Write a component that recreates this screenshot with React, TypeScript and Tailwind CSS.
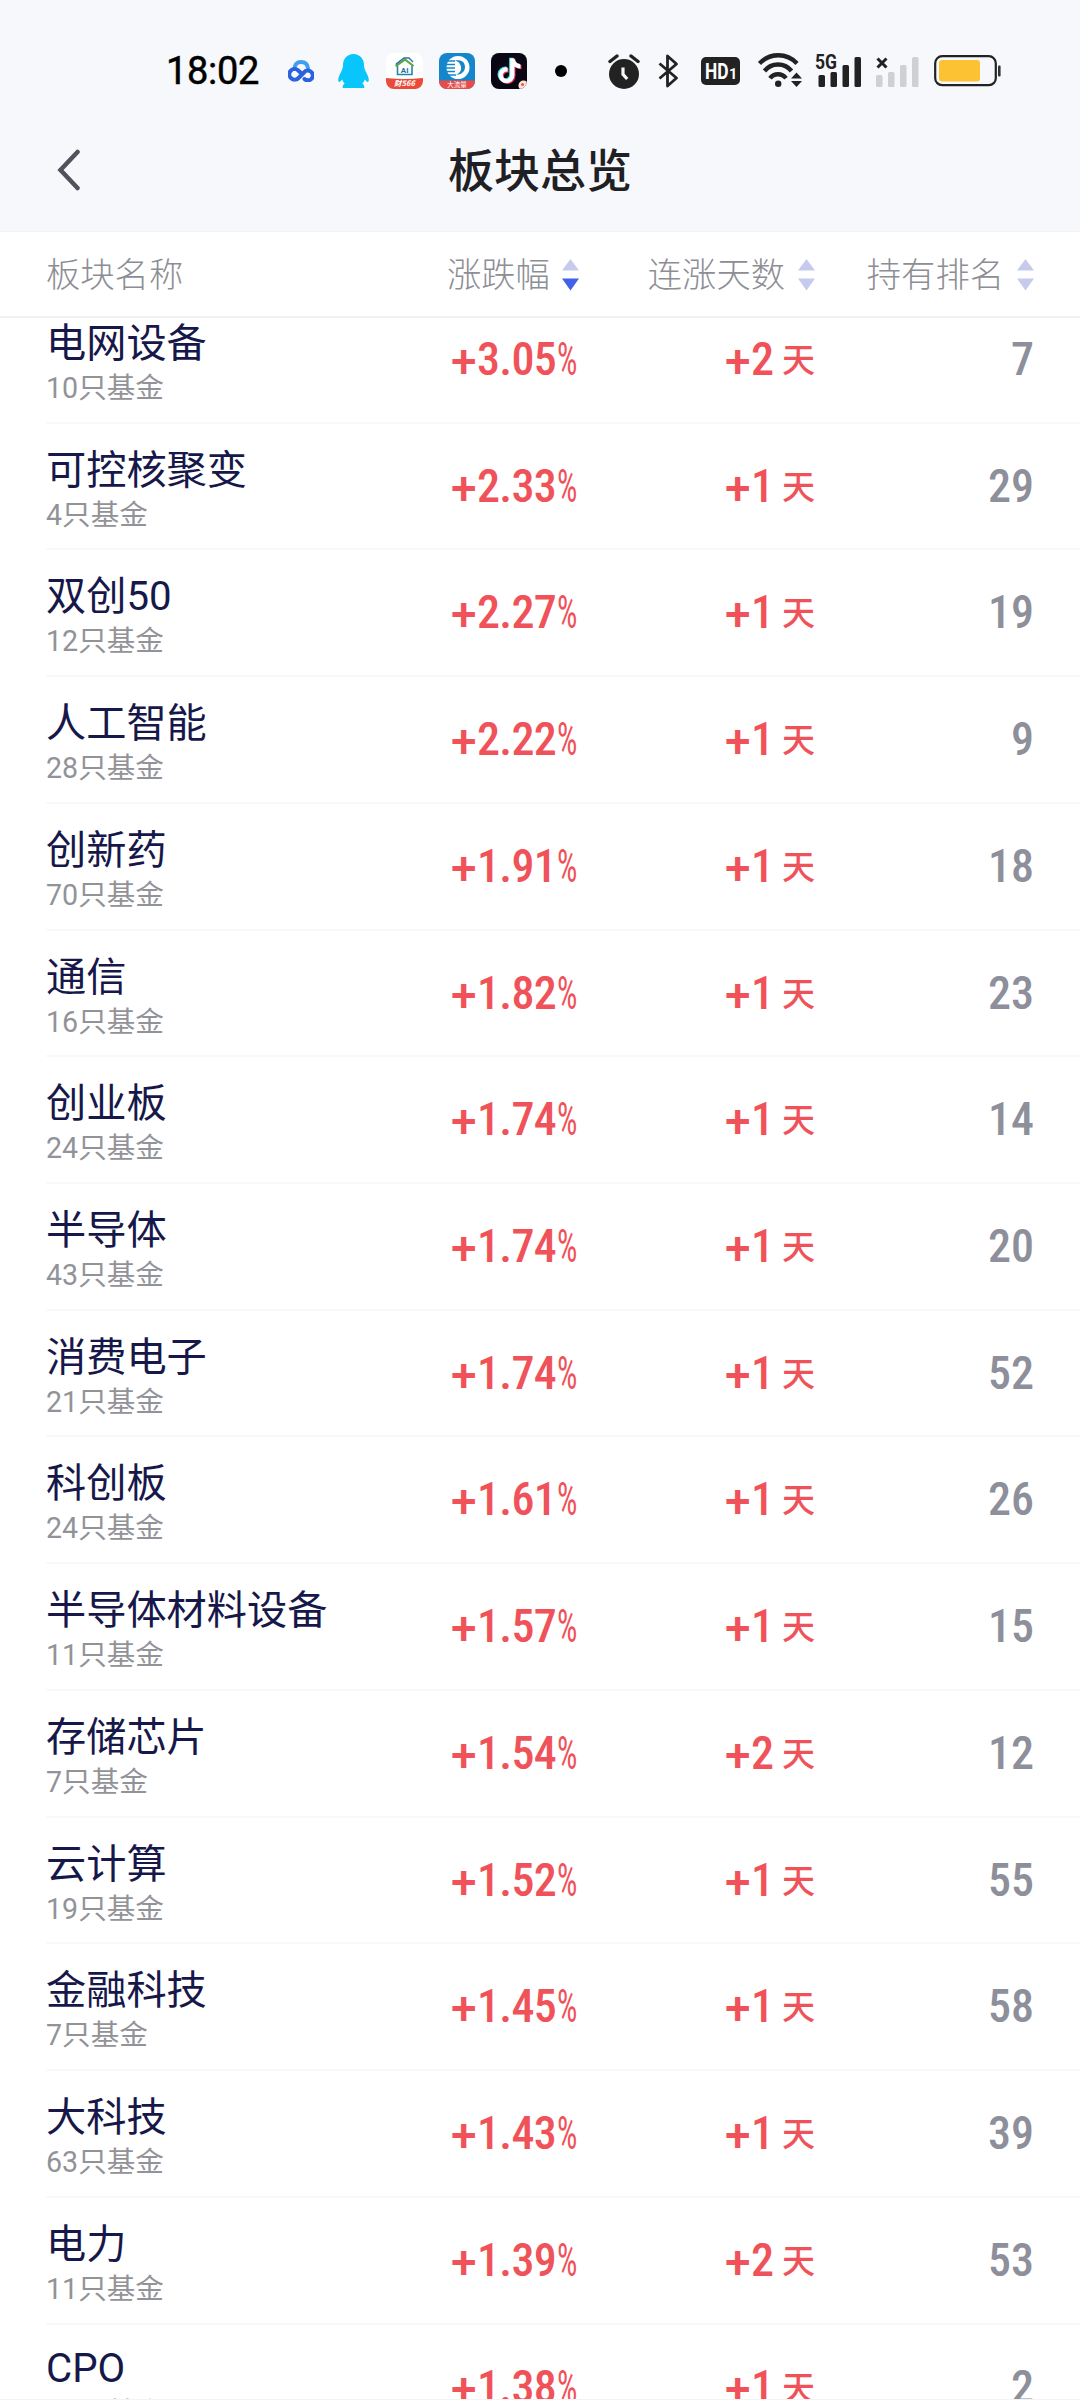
import { FaTiktok } from "react-icons/fa6"
import clsx from "clsx"

type Sector = {
  name: string
  funds: number
  change: string
  days: number
  rank: number
}

const sectors: Sector[] = [
  { name: "电网设备", funds: 10, change: "3.05", days: 2, rank: 7 },
  { name: "可控核聚变", funds: 4, change: "2.33", days: 1, rank: 29 },
  { name: "双创50", funds: 12, change: "2.27", days: 1, rank: 19 },
  { name: "人工智能", funds: 28, change: "2.22", days: 1, rank: 9 },
  { name: "创新药", funds: 70, change: "1.91", days: 1, rank: 18 },
  { name: "通信", funds: 16, change: "1.82", days: 1, rank: 23 },
  { name: "创业板", funds: 24, change: "1.74", days: 1, rank: 14 },
  { name: "半导体", funds: 43, change: "1.74", days: 1, rank: 20 },
  { name: "消费电子", funds: 21, change: "1.74", days: 1, rank: 52 },
  { name: "科创板", funds: 24, change: "1.61", days: 1, rank: 26 },
  { name: "半导体材料设备", funds: 11, change: "1.57", days: 1, rank: 15 },
  { name: "存储芯片", funds: 7, change: "1.54", days: 2, rank: 12 },
  { name: "云计算", funds: 19, change: "1.52", days: 1, rank: 55 },
  { name: "金融科技", funds: 7, change: "1.45", days: 1, rank: 58 },
  { name: "大科技", funds: 63, change: "1.43", days: 1, rank: 39 },
  { name: "电力", funds: 11, change: "1.39", days: 2, rank: 53 },
  { name: "CPO", funds: 18, change: "1.38", days: 1, rank: 2 },
]

function AppIcons() {
  return (
    <div className="flex items-center">
      <svg className="ml-[30px]" width="26" height="22" viewBox="0 0 26 22" fill="none" strokeLinecap="round">
        <path d="M6.500 9C6.500 4.500 9 2 13 2s6.500 2.500 7 6" stroke="#3fa0f2" strokeWidth="4" />
        <path
          d="m13 13-3-2.800A5.300 5.300 0 1 0 10.500 18L16 12.500A4.900 4.900 0 1 1 16.500 19"
          stroke="#2b62e0"
          strokeWidth="4"
          strokeLinejoin="round"
        />
      </svg>
      <svg className="ml-6" width="31" height="34" viewBox="0 0 31 34" fill="#08c6fb">
        <path d="M15.500 0C9 0 5 5 5 11c0 3-1 5-2.500 8S-.5 25.500.6 27.500c.8 1.200 2.400-.5 3.600-2 .6 1.800 1.300 3 2.500 4.300-1.500.7-2.200 1.700-2 4.200h21.600c.2-2.500-.5-3.500-2-4.200 1.200-1.300 1.900-2.500 2.500-4.300 1.200 1.500 2.800 3.200 3.600 2 1.100-2-.4-5.500-1.900-8.500S26 14 26 11C26 5 22 0 15.500 0Z" />
      </svg>
      <svg className="ml-[17px]" width="37" height="36" viewBox="0 0 37 36">
        <clipPath id="house-clip">
          <rect width="37" height="36" rx="8" />
        </clipPath>
        <g clipPath="url(#house-clip)">
          <rect width="37" height="36" fill="#fff" />
          <path d="M11.500 12.500v9h14.500v-9" fill="none" stroke="#2287a8" strokeWidth="1.600" />
          <path d="m9.500 13 9.500-6.500 8.500 6.500" fill="none" stroke="#58a83d" strokeWidth="2.200" />
          <path d="m10 11 8-6h5l4 4" fill="none" stroke="#2a6fb0" strokeWidth="1.300" />
          <text x="18.700" y="19.500" textAnchor="middle" fontSize="8" fontWeight="700" fill="#2573a6" fontFamily="Roboto">AI</text>
          <path d="M0 25q18.500 2 37 0v11H0Z" fill="#ea4b38" />
          <text x="18.500" y="33" textAnchor="middle" fontSize="7.500" fontWeight="700" fontStyle="italic" fill="#fff" fontFamily="Noto Sans CJK SC">财566</text>
        </g>
      </svg>
      <svg className="ml-4" width="36" height="36" viewBox="0 0 36 36">
        <clipPath id="mobile-clip">
          <rect width="36" height="36" rx="8" />
        </clipPath>
        <g clipPath="url(#mobile-clip)">
          <rect width="36" height="36" fill="#1586cb" />
          <circle cx="19" cy="14.500" r="11.500" fill="#fff" />
          <path d="M16 7.500c7-1.500 10 2 10 6.500s-3.500 8-9 7.500c4-1.500 5.500-4 5-7.500s-2.500-5.500-6-6.500Z" fill="#1586cb" />
          <path d="M6 8h10M6 11.500h10M6 15h10M6 18.500h10M8 22h9" stroke="#1586cb" strokeWidth="1.400" />
          <path d="M0 27.500h36V36H0Z" fill="#e84c49" />
          <text x="18" y="34" textAnchor="middle" fontSize="6.500" fill="#fff" fontFamily="Noto Sans CJK SC">大流量</text>
        </g>
      </svg>
      <svg className="ml-4" width="36" height="36" viewBox="0 0 36 36">
        <clipPath id="note-clip">
          <rect width="36" height="36" rx="8" />
        </clipPath>
        <g clipPath="url(#note-clip)">
          <rect width="36" height="36" fill="#0b0613" />
          <FaTiktok x={5} y={4.500} size={25} color="#35e8e6" />
          <FaTiktok x={7} y={6} size={25} color="#f5305a" />
          <FaTiktok x={6} y={5.200} size={25} color="#fff" />
          <circle cx="32.500" cy="32.500" r="5" fill="#fde3dc" />
          <circle cx="31.500" cy="31.500" r="1.500" fill="#ef5540" />
        </g>
      </svg>
      <span className="ml-7 size-3 rounded-full bg-black" />
    </div>
  )
}

function SystemIcons() {
  return (
    <div className="flex items-center">
      <svg className="ml-[41px]" width="32" height="35" viewBox="0 0 32 35" fill="none" stroke="#222">
        <circle cx="16" cy="20" r="15" fill="#222" stroke="none" />
        <path d="m2 7.500 7-5.500M30 7.500 23 2" strokeWidth="3.400" strokeLinecap="round" />
        <path d="M15 13.500v6.800l4.200 4.700" stroke="#f7f8fc" strokeWidth="3.200" />
      </svg>
      <svg className="ml-[18px]" width="22" height="34" viewBox="0 0 22 34" fill="none" stroke="#222" strokeWidth="2.800">
        <path d="m1.500 9.500 17 14.500-9 8V2l9 8-17 14.500" strokeLinejoin="round" />
      </svg>
      <svg className="ml-[21px]" width="39" height="28" viewBox="0 0 39 28">
        <rect width="39" height="28" rx="5" fill="#222" />
        <g fill="#fff" fontFamily="Roboto" fontWeight="700">
          <text x="4" y="22" fontSize="22.500" textLength="23.500" lengthAdjust="spacingAndGlyphs">HD</text>
          <text x="28" y="22" fontSize="14.500">1</text>
        </g>
      </svg>
      <svg className="ml-[17px] overflow-visible" width="45" height="34" viewBox="0 0 45 34" fill="none" stroke="#222" strokeWidth="4.400">
        <path d="M2.500 9.500a25.500 25.500 0 0 1 37.500 0" />
        <path d="M7.500 17a17.300 17.300 0 0 1 27 0" />
        <path d="M13 24.300a10 10 0 0 1 16 0" />
        <circle cx="21.200" cy="29.800" r="3.200" fill="#222" stroke="none" />
        <path d="m39.500 18.500 5.500 6H34ZM39.500 33l5.500-6H34Z" fill="#222" stroke="none" />
      </svg>
      <svg className="ml-[13px] overflow-visible" width="47" height="34" viewBox="0 0 47 34" fill="#222">
        <text x="0" y="14.500" fontSize="19.500" fontWeight="700" fontFamily="Roboto" textLength="22" lengthAdjust="spacingAndGlyphs">5G</text>
        <rect x="3.500" y="21" width="6.500" height="12" rx="1.500" />
        <rect x="15.500" y="18" width="6.500" height="15" rx="1.500" />
        <rect x="27.500" y="11" width="6.500" height="22" rx="1.500" />
        <rect x="39.500" y="3" width="6.500" height="30" rx="1.500" />
      </svg>
      <svg className="ml-[14px]" width="43" height="34" viewBox="0 0 43 34" fill="#cfd0d3">
        <path d="m1.500 4.500 9 9m0-9-9 9" stroke="#222" strokeWidth="3" />
        <rect x="0" y="21" width="6.500" height="12" rx="1.500" />
        <rect x="12" y="18" width="6.500" height="15" rx="1.500" />
        <rect x="24" y="11" width="6.500" height="22" rx="1.500" />
        <rect x="36" y="3" width="6.500" height="30" rx="1.500" />
      </svg>
      <svg className="ml-[15px]" width="67" height="32" viewBox="0 0 67 32">
        <rect x="1.200" y="1.200" width="60.600" height="29" rx="7" fill="none" stroke="#222" strokeWidth="2.200" />
        <rect x="5" y="5" width="41" height="21.500" rx="3" fill="#fcc233" />
        <rect x="64" y="10.500" width="2.600" height="11" rx="1" fill="#333" />
      </svg>
    </div>
  )
}

// the plus sits on the baseline, lower than the font's own
function Plus() {
  return <span className="relative top-[2px] inline-block w-[26px] font-['Roboto']">+</span>
}

function SortArrows({ active = false }: { active?: boolean }) {
  return (
    <svg width="17" height="32" viewBox="0 0 17 32" fill="#c6cbee">
      <path d="M8.500 0 17 11.500H0Z" />
      <path d="M8.500 31.500 17 19.500H0Z" fill={active ? "#4061e8" : "#c6cbee"} />
    </svg>
  )
}

function SectorRow({ sector }: { sector: Sector }) {
  const latin = /^[A-Z]+$/.test(sector.name)

  return (
    <div className="ml-[46px] flex h-[126.730px] shrink-0 border-b-2 border-[#f9f9fa] pr-[46px]">
      <div className={clsx("w-[405px]", latin ? "pt-[21px]" : "pt-6")}>
        <div className="h-[46px] text-[40.200px] leading-[46px] text-[#17184a]">{sector.name}</div>
        <div className="mt-[3px] text-[28.600px] leading-9 text-[#929399]">{sector.funds}只基金</div>
      </div>
      <div className="w-[128px] whitespace-nowrap pt-[27px] font-['Roboto_Condensed','Roboto'] text-[46px] font-medium leading-[70px] text-[#f0525a]">
        <Plus />
        <span className="tracking-[-0.700px]">{sector.change}</span>
        <span className="ml-px inline-block w-[20px] origin-left scale-x-[.7] font-normal">%</span>
      </div>
      <div className="flex w-[236px] justify-end whitespace-nowrap pt-[27px] font-['Roboto_Condensed','Roboto'] text-[46px] font-medium leading-[70px] text-[#f0525a]">
        <span>
          <Plus />
          {sector.days}
        </span>
        <span className="ml-2 font-['Noto_Sans_CJK_SC'] text-[33px] leading-[69px]">天</span>
      </div>
      <div className="grow pt-[27px] text-right font-['Roboto_Condensed','Roboto'] text-[46px] font-medium leading-[70px] text-[#8d8f9b]">
        {sector.rank}
      </div>
    </div>
  )
}

export default function App() {
  return (
    <div className="flex h-[2400px] w-[1080px] flex-col overflow-hidden bg-white font-['Roboto','Noto_Sans_CJK_SC',sans-serif]">
      <header className="h-[232px] shrink-0 border-b border-[#f3f3f5] bg-[#f7f8fc]">
        <div className="flex h-[142px] items-center pl-[166px]">
          <span className="w-[92px] whitespace-nowrap text-[38px] leading-none tracking-[-0.300px] text-black [-webkit-text-stroke:0.5px_black]">18:02</span>
          <AppIcons />
          <SystemIcons />
        </div>
        <div className="grid h-[56px] grid-cols-[1fr_auto_1fr] items-center">
          <svg className="ml-[55px]" width="26" height="42" viewBox="0 0 26 42" fill="none" stroke="#50525c" strokeWidth="4.500" strokeLinecap="round">
            <path d="M22.500 3 5.500 21l17 18" />
          </svg>
          <h1 className="pt-[2px] text-[46px] font-medium leading-none text-[#1f2023]">板块总览</h1>
        </div>
      </header>
      <div className="flex h-[86px] shrink-0 items-center border-b-2 border-[#f1f1f3] pl-[46px] pr-[46px] pt-px text-[34.300px] font-light text-[#8d8e95]">
        <span className="w-[401px] pt-[3px]">板块名称</span>
        <div className="flex w-[132px] items-center justify-between">
          <span className="pt-[3px]">涨跌幅</span>
          <SortArrows active />
        </div>
        <div className="flex w-[236px] items-center justify-end gap-[13px]">
          <span className="pt-[3px]">连涨天数</span>
          <SortArrows />
        </div>
        <div className="flex grow items-center justify-end gap-[13px]">
          <span className="pt-[3px]">持有排名</span>
          <SortArrows />
        </div>
      </div>
      <main className="flex grow flex-col overflow-hidden border-b border-[#f3f3f5]">
        <div className="-mt-[21px] flex flex-col">
          {sectors.map((sector) => (
            <SectorRow key={sector.name} sector={sector} />
          ))}
        </div>
      </main>
    </div>
  )
}
